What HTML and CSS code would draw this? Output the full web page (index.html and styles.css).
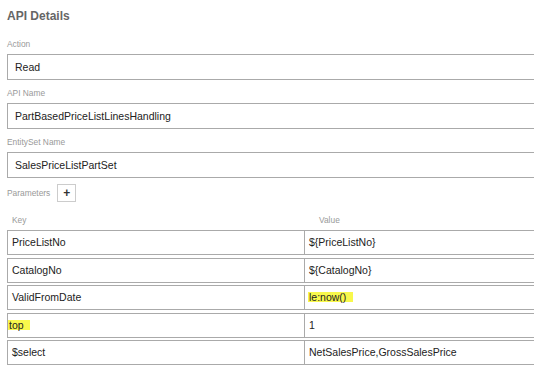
FILE: index.html
```html
<!DOCTYPE html>
<html lang="en">
<head>
    <meta charset="UTF-8">
    <meta name="viewport" content="width=device-width, initial-scale=1.0">
    <title>API Details</title>
    <link rel="stylesheet" href="styles.css">
</head>
<body>
    <div class="panel">
        <h2 class="panel-title">API Details</h2>

        <div class="field">
            <label class="field-label">Action</label>
            <div class="input">Read</div>
        </div>

        <div class="field">
            <label class="field-label">API Name</label>
            <div class="input">PartBasedPriceListLinesHandling</div>
        </div>

        <div class="field">
            <label class="field-label">EntitySet Name</label>
            <div class="input">SalesPriceListPartSet</div>
        </div>

        <div class="params-head">
            <span class="field-label">Parameters</span>
            <button class="add-btn" type="button">+</button>
        </div>

        <div class="params">
            <div class="params-header">
                <div class="col-key">Key</div>
                <div class="col-value">Value</div>
            </div>
            <div class="param-row">
                <div class="cell cell-key">PriceListNo</div>
                <div class="cell cell-value">${PriceListNo}</div>
            </div>
            <div class="param-row">
                <div class="cell cell-key">CatalogNo</div>
                <div class="cell cell-value">${CatalogNo}</div>
            </div>
            <div class="param-row">
                <div class="cell cell-key">ValidFromDate</div>
                <div class="cell cell-value"><span class="hl hl-value">le:now()</span></div>
            </div>
            <div class="param-row">
                <div class="cell cell-key"><span class="hl hl-key">top</span></div>
                <div class="cell cell-value">1</div>
            </div>
            <div class="param-row">
                <div class="cell cell-key">$select</div>
                <div class="cell cell-value">NetSalesPrice,GrossSalesPrice</div>
            </div>
        </div>
    </div>
</body>
</html>
```

FILE: styles.css
```css
* {
    margin: 0;
    padding: 0;
    box-sizing: border-box;
}

body {
    font-family: 'Liberation Sans', Arial, sans-serif;
    background-color: #fff;
    color: #222;
    overflow: hidden;
}

.panel {
    width: 620px;
    padding-left: 7px;
    padding-top: 8px;
}

.panel-title {
    font-size: 12px;
    font-weight: 700;
    color: #666;
    line-height: 16px;
    margin-bottom: 14px;
}

.field {
    margin-top: 7px;
}

.field-label {
    display: block;
    font-size: 8.4px;
    color: #999;
    line-height: 12px;
    margin-bottom: 4px;
}

.input {
    height: 26px;
    border: 1px solid #aaa;
    padding-left: 7px;
    font-size: 10.5px;
    line-height: 24px;
}

.params-head {
    display: flex;
    align-items: center;
    gap: 7px;
    margin-top: 6px;
    height: 18px;
}

.params-head .field-label {
    margin-bottom: 0;
}

.add-btn {
    width: 19px;
    height: 18px;
    border: 1px solid #ccc;
    background: #fff;
    color: #333;
    font-family: 'Liberation Sans', Arial, sans-serif;
    font-size: 12px;
    font-weight: 700;
    line-height: 16px;
}

.params {
    display: flex;
    flex-direction: column;
    gap: 2.5px;
    margin-top: 12px;
}

.params-header {
    display: flex;
    font-size: 8.4px;
    color: #999;
    line-height: 12px;
    margin-bottom: 1.5px;
}

.col-key {
    width: 298px;
    padding-left: 5px;
}

.col-value {
    padding-left: 14px;
}

.param-row {
    display: flex;
    height: 25px;
}

.cell {
    border: 1px solid #aaa;
    font-size: 10.5px;
    line-height: 23px;
    padding-left: 4px;
    white-space: nowrap;
}

.cell-key {
    width: 298px;
}

.cell-value {
    flex: 1;
    border-left: 1px solid #aaa;
    margin-left: -1px;
}

.hl {
    display: inline-block;
    background: #f8f84c;
    line-height: 10px;
    height: 10px;
}

.hl-key {
    margin-left: -4px;
    padding: 0 6px 0 1px;
}

.hl-value {
    margin-left: -1px;
    padding: 0 7px 0 1px;
}
```
